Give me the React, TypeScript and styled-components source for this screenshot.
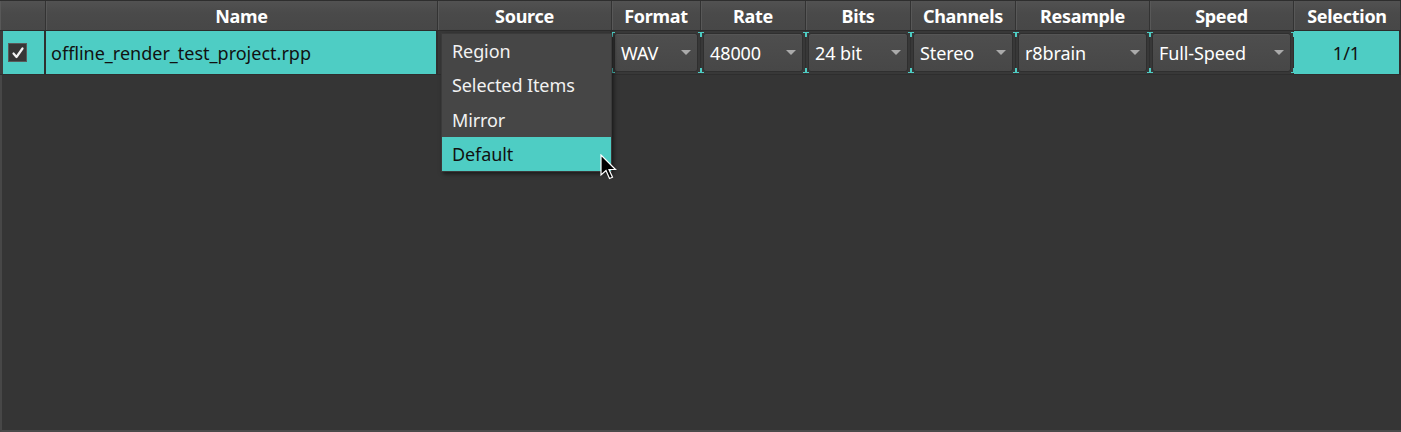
import React from "react";
import styled, { createGlobalStyle } from "styled-components";

const Global = createGlobalStyle`
  html, body { margin: 0; padding: 0; background: #353535; }
  body { font-family: "Noto Sans", "Open Sans", sans-serif; }
  #root { width: 1401px; height: 432px; overflow: hidden; }
`;

const TEAL = "#4ecdc4";
const COLS = "46px 392px 174px 89px 105px 105px 105px 134px 144px 107px";

const Frame = styled.div`
  position: relative;
  width: 1401px;
  height: 432px;
  box-sizing: border-box;
  background: #353535;
  border-left: 2px solid #474747;
  border-bottom: 2px solid #4a4a4a;
  display: flex;
  flex-direction: column;
`;

const HeaderRow = styled.div`
  display: grid;
  grid-template-columns: ${COLS};
  height: 31px;
  box-sizing: border-box;
  border-top: 1px solid #2e2e2e;
  border-bottom: 1px solid #2c2c2c;
  margin-left: -2px;
`;

const HeaderCell = styled.div`
  display: flex;
  align-items: center;
  justify-content: center;
  background: linear-gradient(#525252, #4a4a4a 40%, #474747);
  border-right: 1px solid #333;
  box-shadow: inset 1px 0 0 #585858;
  color: #fff;
  font-weight: 700;
  font-size: 18px;
  letter-spacing: -0.3px;
  white-space: nowrap;
`;

const DataRow = styled.div`
  display: grid;
  grid-template-columns: ${COLS};
  height: 43px;
  margin-left: -2px;
  border-bottom: 1px solid #2e2e2e;
`;

const Cell = styled.div<{ $teal?: boolean; $center?: boolean }>`
  position: relative;
  display: flex;
  align-items: center;
  justify-content: ${(p) => (p.$center ? "center" : "flex-start")};
  box-sizing: border-box;
  background: ${(p) => (p.$teal ? TEAL : "#383838")};
  border-right: 2px solid #2f2f2f;
  color: #111;
  font-size: 18px;
  padding: ${(p) => (p.$center ? "0" : "0 5px")};
  white-space: nowrap;
`;

const CheckCell = styled(Cell)`
  padding-left: 5px;
  border-left: 3px solid #3d3d3d;
`;

const CheckBox = styled.div`
  width: 19px;
  height: 19px;
  box-sizing: border-box;
  background: #373737;
  border: 1px solid #5a5a5a;
  display: flex;
  align-items: center;
  justify-content: center;
`;

const ComboCell = styled.div`
  position: relative;
  display: flex;
  align-items: center;
  box-sizing: border-box;
  padding: 1px 2px 1px 2px;
  background: #383838;
  border-right: 1px solid #2f2f2f;
`;

const Corner = styled.span<{ $side: "l" | "r"; $v: "t" | "b" }>`
  position: absolute;
  width: 2px;
  height: 4px;
  ${(p) => (p.$side === "l" ? "left: 0;" : "right: -1px;")}
  ${(p) => (p.$v === "t" ? "top: 1px;" : "bottom: 1px;")}
  border-${(p) => (p.$side === "l" ? "left" : "right")}: 1px solid ${TEAL};
  border-${(p) => (p.$v === "t" ? "top" : "bottom")}: 1px solid ${TEAL};
`;

const Combo = styled.div`
  flex: 1;
  height: 39px;
  box-sizing: border-box;
  border: 1px solid #2f2f2f;
  border-radius: 3px;
  background: linear-gradient(#4e4e4e, #474747);
  box-shadow: inset 0 1px 0 #555;
  display: flex;
  align-items: center;
  justify-content: space-between;
  padding: 0 6px 0 6px;
  color: #fff;
  font-size: 18px;
  letter-spacing: -0.1px;
  white-space: nowrap;
`;

const Caret = styled.span`
  width: 0;
  height: 0;
  border-left: 5px solid transparent;
  border-right: 5px solid transparent;
  border-top: 5px solid #aaa;
`;

const Popup = styled.div`
  position: absolute;
  left: 439px;
  top: 33px;
  width: 169px;
  background: #464646;
  border: 1px solid #3a3a3a;
  box-shadow: 2px 2px 4px rgba(0, 0, 0, 0.5);
  display: flex;
  flex-direction: column;
  z-index: 2;
`;

const PopupItem = styled.div<{ $active?: boolean }>`
  height: 34.3px;
  display: flex;
  align-items: center;
  padding-left: 10px;
  font-size: 18px;
  letter-spacing: -0.1px;
  color: ${(p) => (p.$active ? "#111" : "#f2f2f2")};
  background: ${(p) => (p.$active ? TEAL : "transparent")};
`;

const Cursor = styled.svg`
  position: absolute;
  left: 598px;
  top: 154px;
  z-index: 3;
`;

const Body = styled.div`
  flex: 1;
`;

const combos = [
  { v: "WAV" },
  { v: "48000" },
  { v: "24 bit" },
  { v: "Stereo" },
  { v: "r8brain" },
  { v: "Full-Speed" },
];

const headers = [
  "",
  "Name",
  "Source",
  "Format",
  "Rate",
  "Bits",
  "Channels",
  "Resample",
  "Speed",
  "Selection",
];

export default function App() {
  return (
    <>
      <Global />
      <Frame>
        <HeaderRow>
          {headers.map((h, i) => (
            <HeaderCell key={i}>{h}</HeaderCell>
          ))}
        </HeaderRow>
        <DataRow>
          <CheckCell $teal>
            <CheckBox>
              <svg width="14" height="14" viewBox="0 0 14 14">
                <path
                  d="M2.5 7.5 L5.5 11 L11.5 2.5"
                  fill="none"
                  stroke="#f4f4f4"
                  strokeWidth="2.2"
                  strokeLinecap="round"
                  strokeLinejoin="round"
                />
              </svg>
            </CheckBox>
          </CheckCell>
          <Cell $teal>offline_render_test_project.rpp</Cell>
          <Cell />
          {combos.map((c, i) => (
            <ComboCell key={i}>
              <Corner $side="l" $v="t" />
              <Corner $side="l" $v="b" />
              <Corner $side="r" $v="t" />
              <Corner $side="r" $v="b" />
              <Combo>
                <span>{c.v}</span>
                <Caret />
              </Combo>
            </ComboCell>
          ))}
          <Cell $teal $center>
            1/1
          </Cell>
        </DataRow>
        <Body />
        <Popup>
          <PopupItem>Region</PopupItem>
          <PopupItem>Selected Items</PopupItem>
          <PopupItem>Mirror</PopupItem>
          <PopupItem $active>Default</PopupItem>
        </Popup>
        <Cursor width="18" height="28" viewBox="0 0 18 28">
          <path
            d="M1 1 L1 21 L6 16.5 L9.5 24.5 L12.5 23.2 L9 15.5 L15.5 15.5 Z"
            fill="#000"
            stroke="#fff"
            strokeWidth="1.2"
            strokeLinejoin="miter"
          />
        </Cursor>
      </Frame>
    </>
  );
}
